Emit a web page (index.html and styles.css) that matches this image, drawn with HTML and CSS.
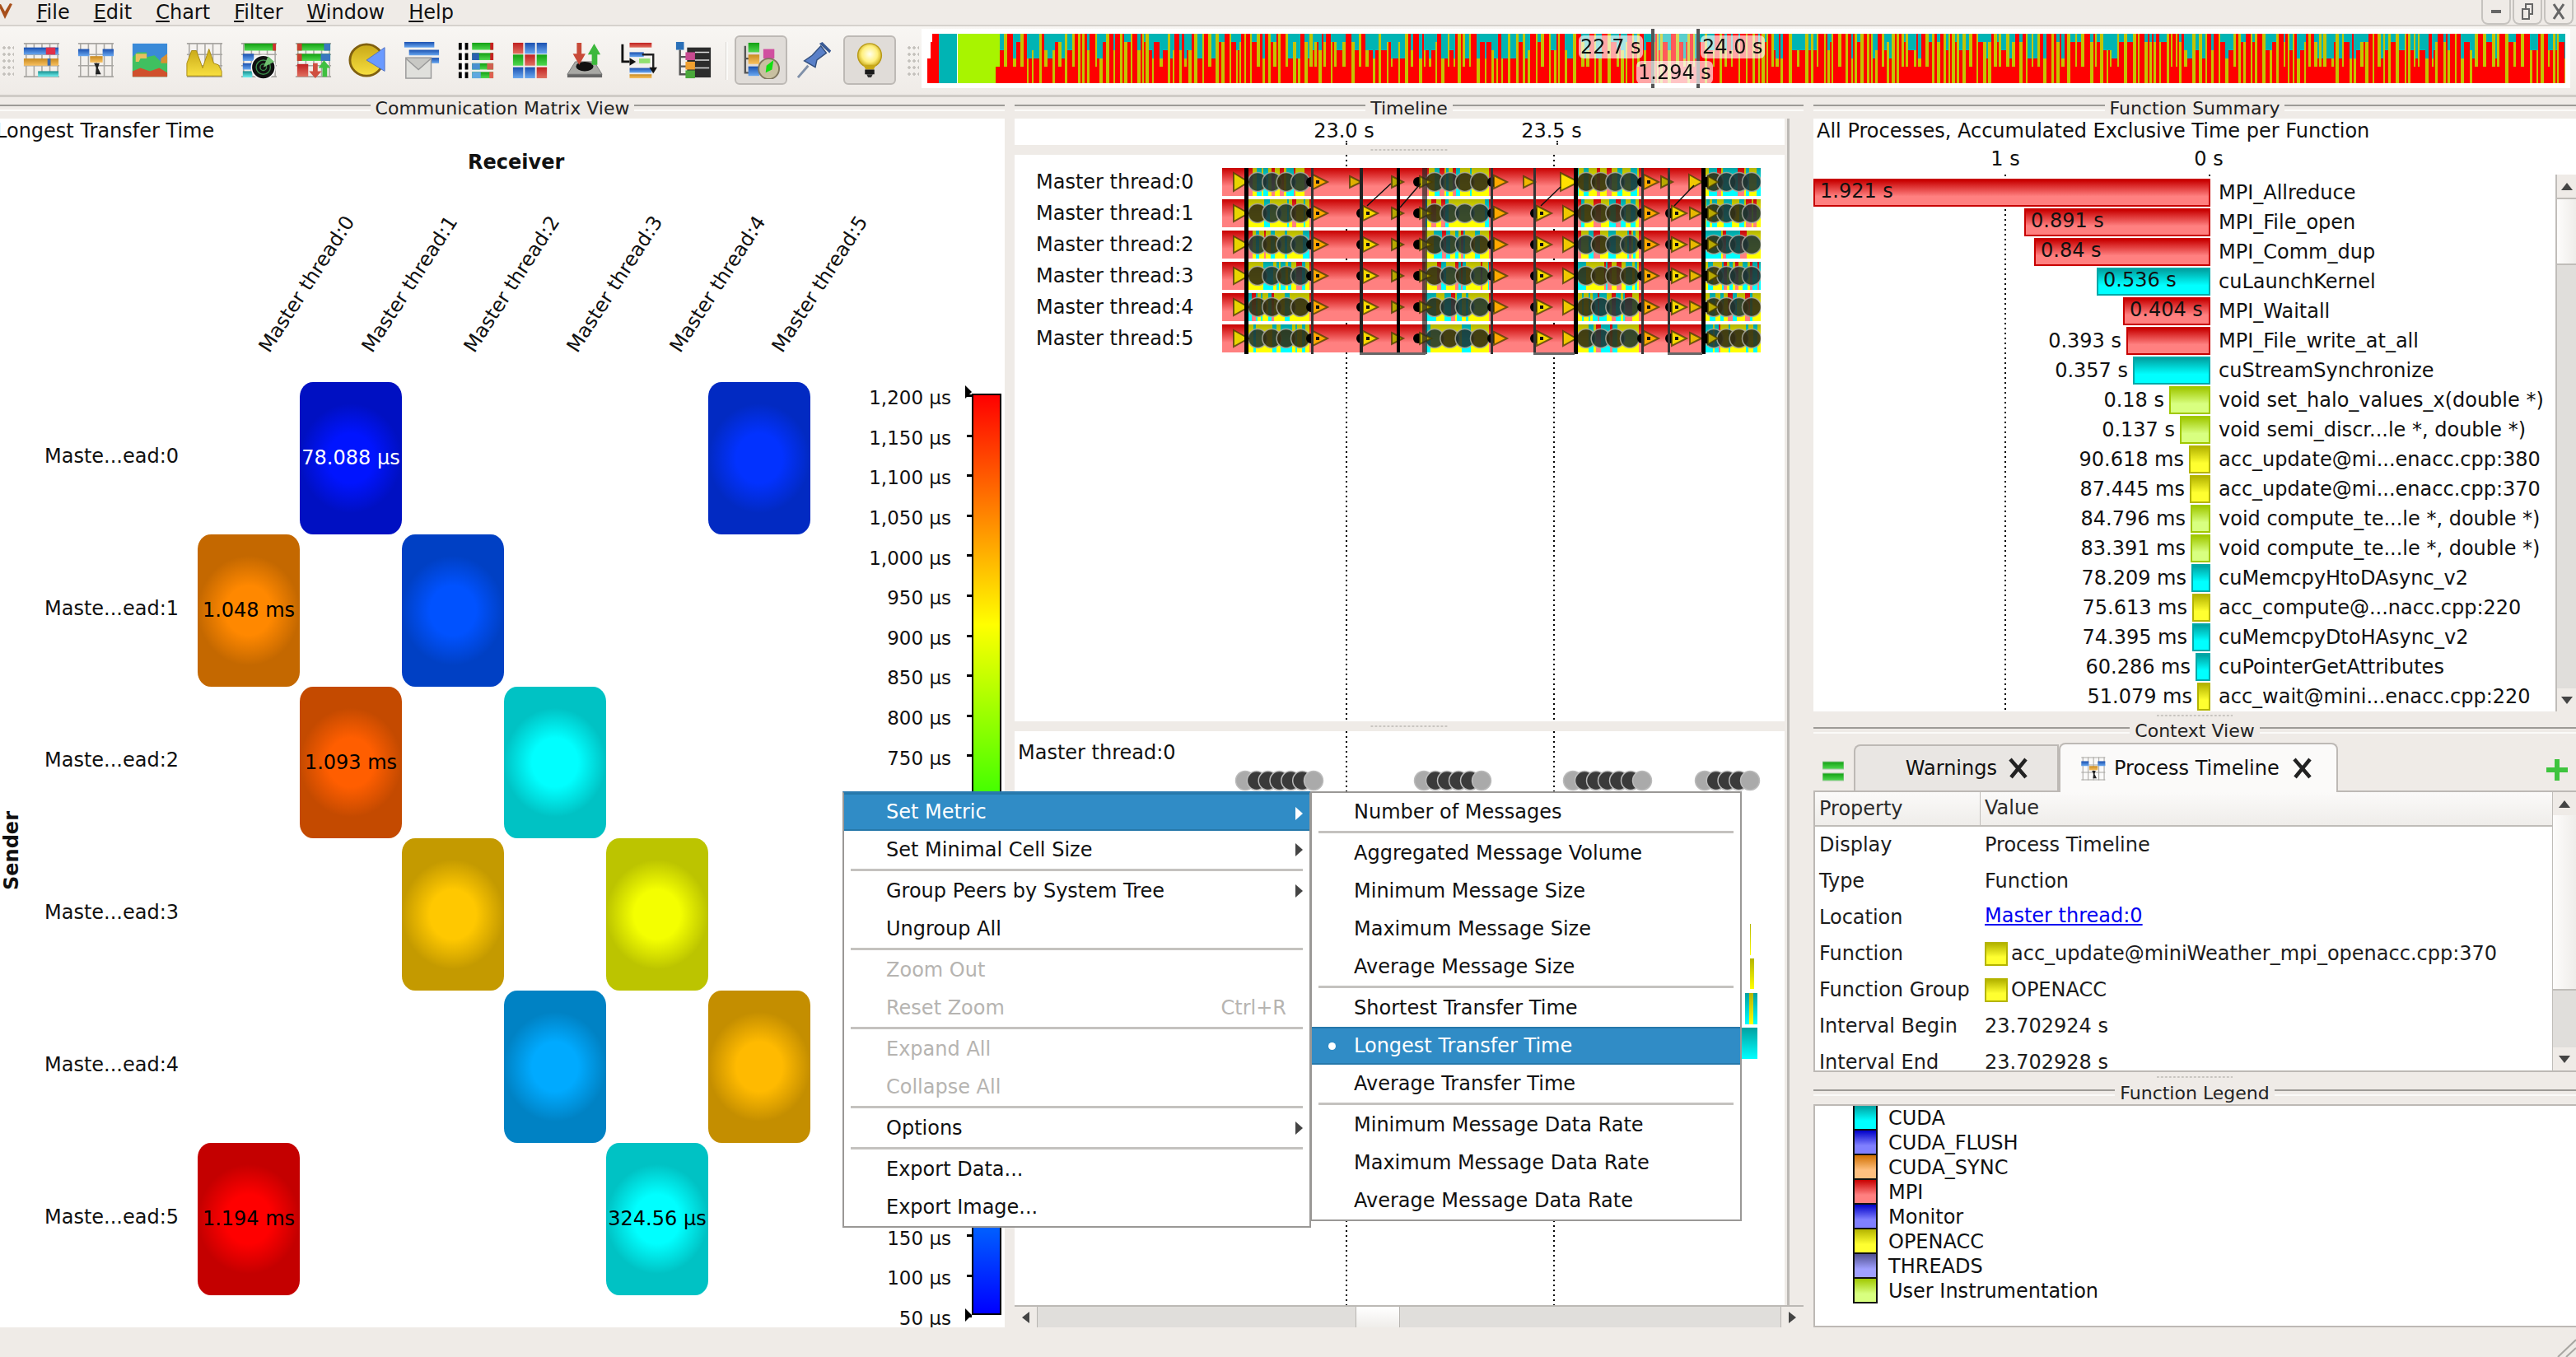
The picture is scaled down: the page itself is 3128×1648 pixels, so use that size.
FILE: index.html
```html
<!DOCTYPE html>
<html>
<head>
  <meta charset="utf-8" />
  <title>Vampir</title>
  <link rel="stylesheet" href="styles.css">
</head>
<body>
  <svg class="defs" width="0" height="0">
    <defs>
      <linearGradient id="gb" x1="0" y1="0" x2="0" y2="1"><stop offset="0" stop-color="#1a50b0"/><stop offset="1" stop-color="#6aa8f0"/></linearGradient>
      <linearGradient id="gg" x1="0" y1="0" x2="0" y2="1"><stop offset="0" stop-color="#12a012"/><stop offset="1" stop-color="#50d850"/></linearGradient>
      <linearGradient id="gr" x1="0" y1="0" x2="0" y2="1"><stop offset="0" stop-color="#c02020"/><stop offset="1" stop-color="#e07060"/></linearGradient>
      <linearGradient id="go" x1="0" y1="0" x2="0" y2="1"><stop offset="0" stop-color="#c88a20"/><stop offset="1" stop-color="#f8c060"/></linearGradient>
      <linearGradient id="gc" x1="0" y1="0" x2="0" y2="1"><stop offset="0" stop-color="#1a9090"/><stop offset="1" stop-color="#70f0f0"/></linearGradient>
      <linearGradient id="gy" x1="0" y1="0" x2="0" y2="1"><stop offset="0" stop-color="#c8a818"/><stop offset="1" stop-color="#f8e040"/></linearGradient>
      <radialGradient id="gl" cx="0.5" cy="0.45" r="0.55"><stop offset="0" stop-color="#fffff0"/><stop offset="0.6" stop-color="#fff080"/><stop offset="1" stop-color="#c8a818"/></radialGradient>
      <symbol id="grid" viewBox="0 0 48 48">
        <path d="M5 2V46M15 2V46M25 2V46M35 2V46M45 2V46M2 3H47M2 17H47M2 31H47M2 45H47" stroke="#a8a6a2" stroke-width="1.6" fill="none"/>
      </symbol>
    </defs>
  </svg>

  <div class="menubar">
    <svg class="logo" width="16" height="24" viewBox="0 0 16 24"><path d="M-2 3L6 20L15 2L12 1L6 11L1 2Z" fill="#a8501c"/></svg>
    <span class="menu-item"><u>F</u>ile</span>
    <span class="menu-item"><u>E</u>dit</span>
    <span class="menu-item"><u>C</u>hart</span>
    <span class="menu-item"><u>F</u>ilter</span>
    <span class="menu-item"><u>W</u>indow</span>
    <span class="menu-item"><u>H</u>elp</span>
    <div class="win-buttons">
      <span class="win-btn"><svg width="20" height="24" viewBox="0 0 20 24"><rect x="4" y="10" width="12" height="4" fill="#666"/></svg></span>
      <span class="win-btn"><svg width="20" height="24" viewBox="0 0 20 24"><path d="M8 3H16V15H12V21H4V9H8Z M8 9H12V15" fill="none" stroke="#666" stroke-width="2"/></svg></span>
      <span class="win-btn"><svg width="20" height="24" viewBox="0 0 20 24"><path d="M4 3L16 21M16 3L4 21" fill="none" stroke="#666" stroke-width="3"/></svg></span>
    </div>
  </div>

  <div class="toolbar">
    <div class="handle"></div>
    <div class="tool">
      <svg viewBox="0 0 48 48"><use href="#grid" width="48" height="48"/><rect x="2" y="8" width="44" height="9" fill="url(#gb)"/><rect x="30" y="8" width="12" height="9" fill="#e0304a"/><rect x="2" y="22" width="44" height="9" fill="url(#go)"/><rect x="32" y="22" width="4" height="9" fill="#3a6ab0"/><rect x="20" y="38" width="26" height="7" fill="url(#gc)"/></svg>
    </div>
    <div class="tool">
      <svg viewBox="0 0 48 48"><use href="#grid" width="48" height="48"/><rect x="2" y="10" width="14" height="9" fill="url(#gb)"/><rect x="33" y="10" width="14" height="9" fill="url(#gb)"/><rect x="17" y="19" width="16" height="8" fill="url(#go)"/><path d="M22 28H29L27 34L31 42H24L25 34Z" fill="#222"/></svg>
    </div>
    <div class="tool">
      <svg viewBox="0 0 48 48"><rect x="2" y="3" width="44" height="42" fill="#3a8ad8"/><path d="M2 20L8 14L20 14L20 20L30 18L38 26L46 20V45H2Z" fill="#40c060"/><path d="M6 16H20V22H12L10 26H6Z" fill="#e8c060"/><path d="M38 22L46 16V28H38Z" fill="#d89030"/><path d="M2 38L12 34L24 38L36 34L46 40V45H2Z" fill="#d0502c"/></svg>
    </div>
    <div class="tool">
      <svg viewBox="0 0 48 48"><use href="#grid" width="48" height="48"/><path d="M2 44V28L8 12L14 12L22 34L30 10L36 28L42 30L46 38V44Z" fill="url(#gy)" stroke="#a88a10" stroke-width="1"/></svg>
    </div>
    <div class="tool">
      <svg viewBox="0 0 48 48"><use href="#grid" width="48" height="48"/><rect x="6" y="3" width="40" height="9" fill="url(#gg)"/><rect x="42" y="3" width="4" height="9" fill="#d03030"/><rect x="4" y="16" width="14" height="9" fill="url(#gb)"/><rect x="4" y="28" width="12" height="8" fill="url(#gb)"/><rect x="4" y="38" width="12" height="8" fill="url(#gc)"/><circle cx="30" cy="33" r="15" fill="#111" stroke="#fff" stroke-width="1.5"/><circle cx="30" cy="33" r="9" fill="none" stroke="#3a8a4a" stroke-width="1.5"/><circle cx="30" cy="33" r="4" fill="none" stroke="#3a8a4a" stroke-width="1.5"/><path d="M30 33L36 19L44 26Z" fill="#70c070"/></svg>
    </div>
    <div class="tool">
      <svg viewBox="0 0 48 48"><use href="#grid" width="48" height="48"/><rect x="4" y="3" width="42" height="9" fill="url(#gg)"/><rect x="4" y="3" width="6" height="9" fill="#c84030"/><rect x="38" y="3" width="8" height="9" fill="#3a78c0"/><rect x="4" y="16" width="42" height="9" fill="url(#gg)"/><rect x="4" y="16" width="6" height="9" fill="#c84030"/><rect x="34" y="16" width="12" height="9" fill="#3a78c0"/><rect x="4" y="29" width="14" height="16" fill="url(#gr)"/><path d="M24 28H30V38H35L27 47L19 38H24Z" fill="#d05040"/><path d="M38 24L46 34H42V45H36V34H31Z" fill="#40c040"/></svg>
    </div>
    <div class="tool">
      <svg viewBox="0 0 48 48"><ellipse cx="23" cy="24" rx="21" ry="20" fill="url(#gy)" stroke="#806010" stroke-width="3"/><path d="M23 24L46 8V38Z" fill="#6a9aff" stroke="#5070c0"/></svg>
    </div>
    <div class="tool">
      <svg viewBox="0 0 48 48"><rect x="2" y="1" width="38" height="7" fill="url(#gb)"/><rect x="8" y="11" width="38" height="7" fill="url(#gb)"/><rect x="14" y="21" width="32" height="7" fill="url(#gb)"/><rect x="4" y="21" width="32" height="26" fill="#e0e0dc" stroke="#999" stroke-width="1.5"/><path d="M4 22L20 36L36 22" fill="#c8c8c4" stroke="#999" stroke-width="1.5"/></svg>
    </div>
    <div class="tool">
      <svg viewBox="0 0 48 48"><path d="M2 2H14V11H2ZM2 15H14V24H2ZM2 28H14V36H2ZM2 39H14V47H2Z" fill="#000"/><path d="M6 2H10V47H6Z" fill="#fff"/><rect x="19" y="2" width="27" height="9" fill="url(#gg)"/><rect x="42" y="2" width="4" height="9" fill="#c82020"/><rect x="19" y="15" width="27" height="9" fill="url(#gg)"/><rect x="19" y="15" width="9" height="9" fill="#2a60b0"/><rect x="42" y="15" width="4" height="9" fill="#c82020"/><rect x="19" y="28" width="27" height="8" fill="url(#gg)"/><rect x="19" y="28" width="10" height="8" fill="#4a90d0"/><rect x="38" y="28" width="8" height="8" fill="#d06050"/><rect x="19" y="39" width="27" height="8" fill="url(#gg)"/><rect x="19" y="39" width="11" height="8" fill="#60a8e0"/><rect x="41" y="39" width="5" height="8" fill="#e06050"/></svg>
    </div>
    <div class="tool">
      <svg viewBox="0 0 48 48"><rect x="2" y="2" width="13" height="14" fill="url(#gr)"/><rect x="17" y="2" width="13" height="14" fill="url(#gb)"/><rect x="32" y="2" width="13" height="14" fill="url(#gb)"/><rect x="2" y="17" width="13" height="14" fill="url(#gg)"/><rect x="17" y="17" width="13" height="14" fill="url(#gr)"/><rect x="32" y="17" width="13" height="14" fill="url(#gg)"/><rect x="2" y="33" width="13" height="14" fill="url(#gb)"/><rect x="17" y="33" width="13" height="14" fill="url(#gb)"/><rect x="32" y="33" width="13" height="14" fill="url(#gr)"/></svg>
    </div>
    <div class="tool">
      <svg viewBox="0 0 48 48"><path d="M12 26H36L46 42H2Z" fill="#a8a8a4" stroke="#777"/><rect x="2" y="42" width="44" height="4" fill="#666"/><ellipse cx="24" cy="32" rx="11" ry="6" fill="#111"/><path d="M14 2H20V16H25L17 30L9 16H14Z" fill="#c84a38"/><path d="M36 3L44 17H40V30H33V17H28Z" fill="#3cb83c"/></svg>
    </div>
    <div class="tool">
      <svg viewBox="0 0 48 48"><rect x="12" y="2" width="28" height="6" fill="url(#gr)"/><rect x="12" y="14" width="18" height="6" fill="url(#gb)"/><rect x="12" y="24" width="24" height="5" fill="#e8e8e4"/><rect x="24" y="22" width="14" height="6" fill="#90e070"/><rect x="12" y="34" width="28" height="6" fill="url(#gb)"/><rect x="12" y="42" width="28" height="5" fill="url(#go)"/><path d="M3 4V26H12" fill="none" stroke="#111" stroke-width="3"/><path d="M12 21L20 26L12 31Z" fill="#111"/><path d="M28 17H42V34" fill="none" stroke="#222" stroke-width="2.5"/><path d="M37 33H47L42 41Z" fill="#111"/></svg>
    </div>
    <div class="tool">
      <svg viewBox="0 0 48 48"><rect x="2" y="1" width="10" height="10" fill="#2a70b8"/><path d="M7 11V42H16M7 20H16M7 32H16" fill="none" stroke="#555" stroke-width="2.5"/><rect x="16" y="8" width="30" height="38" fill="#2c2c2c"/><path d="M26 14H44M26 24H44M26 34H44" stroke="#ddd" stroke-width="1.5"/><rect x="14" y="14" width="12" height="10" fill="#c84a90"/><rect x="14" y="26" width="12" height="10" fill="#f0a030"/><rect x="14" y="37" width="12" height="10" fill="#4aa83a"/></svg>
    </div>
    <div class="sep"></div>
    <div class="tool checked">
      <svg viewBox="0 0 48 48"><path d="M4 6V40H10M4 22H10" fill="none" stroke="#555" stroke-width="2.5"/><rect x="8" y="2" width="14" height="12" fill="url(#gg)"/><rect x="8" y="17" width="14" height="12" fill="url(#go)"/><rect x="8" y="32" width="14" height="12" fill="url(#gb)"/><rect x="27" y="10" width="14" height="12" fill="#d050a0"/><circle cx="34" cy="35" r="13" fill="#c8c0a0" stroke="#807860" stroke-width="2"/><path d="M31 31L40 24L38 36L30 40Z" fill="#10e010"/></svg>
    </div>
    <div class="tool">
      <svg viewBox="0 0 48 48"><path d="M2 46L15 31" stroke="#8090a8" stroke-width="3"/><path d="M10 25L24 33L26 24L38 15L31 6L20 18Z" fill="#5a80c8" stroke="#34507e" stroke-width="1.5"/><path d="M29 3L42 15L44 12L33 1Z" fill="#3a5a94"/></svg>
    </div>
    <div class="tool checked">
      <svg viewBox="0 0 48 48"><circle cx="24" cy="18" r="15" fill="url(#gl)" stroke="#b89a18" stroke-width="1.5"/><path d="M16 30H32L29 36H19Z" fill="#c8a818"/><rect x="18" y="36" width="12" height="6" fill="#1a1a1a"/><path d="M20 42H28L26 46H22Z" fill="#333"/></svg>
    </div>
    <div class="handle handle-end"></div>
    <div class="overview">
      <canvas id="overviewCanvas" width="1989" height="60"></canvas>
      <div class="ov-select"></div>
      <span class="ov-label ov-begin">22.7 s</span>
      <span class="ov-label ov-end">24.0 s</span>
      <span class="ov-label ov-len">1.294 s</span>
    </div>
  </div>

  <div class="docks">
    <div class="dock dock-matrix">
      <div class="dock-title"><span>Communication Matrix View</span></div>
      <div class="matrix-view">
        <div class="metric-name">Longest Transfer Time</div>
        <div class="receiver">Receiver</div>
        <div class="matrix-body">
          <div class="matrix">
            <div class="sender"><b>Sender</b></div>
            <div class="col-heads">
              <span>Master thread:0</span>
              <span>Master thread:1</span>
              <span>Master thread:2</span>
              <span>Master thread:3</span>
              <span>Master thread:4</span>
              <span>Master thread:5</span>
            </div>
            <div class="row-label r0">Maste...ead:0</div>
            <div class="row-label r1">Maste...ead:1</div>
            <div class="row-label r2">Maste...ead:2</div>
            <div class="row-label r3">Maste...ead:3</div>
            <div class="row-label r4">Maste...ead:4</div>
            <div class="row-label r5">Maste...ead:5</div>

            <div class="cell c1 r0 light" style="--edge:#0010c2;--mid:#0014ff">78.088 µs</div>
            <div class="cell c5 r0" style="--edge:#022ac2;--mid:#0232ff"></div>
            <div class="cell c0 r1" style="--edge:#c46800;--mid:#ff8800">1.048 ms</div>
            <div class="cell c2 r1" style="--edge:#0040c4;--mid:#0052ff"></div>
            <div class="cell c1 r2" style="--edge:#c44a00;--mid:#ff5e00">1.093 ms</div>
            <div class="cell c3 r2" style="--edge:#00c2c4;--mid:#00ffff"></div>
            <div class="cell c2 r3" style="--edge:#c49a00;--mid:#ffc800"></div>
            <div class="cell c4 r3" style="--edge:#bcc400;--mid:#f4ff00"></div>
            <div class="cell c3 r4" style="--edge:#0082c4;--mid:#00aaff"></div>
            <div class="cell c5 r4" style="--edge:#c48e00;--mid:#ffba00"></div>
            <div class="cell c0 r5" style="--edge:#c40000;--mid:#ff0000">1.194 ms</div>
            <div class="cell c4 r5" style="--edge:#00c2c4;--mid:#00ffff">324.56 µs</div>
          </div>
          <div class="scale">
            <div class="scale-ticks">
              <span>1,200 µs</span><span>1,150 µs</span><span>1,100 µs</span><span>1,050 µs</span>
              <span>1,000 µs</span><span>950 µs</span><span>900 µs</span><span>850 µs</span>
              <span>800 µs</span><span>750 µs</span>
              <!-- these ones sit under the open menu -->
              <span></span><span></span><span></span><span></span><span></span><span></span>
              <span></span><span></span><span></span><span></span><span></span>
              <span>150 µs</span><span>100 µs</span><span>50 µs</span>
            </div>
            <div class="scale-bar"></div>
          </div>
        </div>
      </div>
    </div>

    <div class="dock dock-timeline">
      <div class="dock-title"><span>Timeline</span></div>
      <div class="tl-ruler">
        <span class="tl-tick t1">23.0 s</span>
        <span class="tl-tick t2">23.5 s</span>
      </div>
      <div class="grip"></div>
      <div class="tl-panel tl-upper">
        <i class="dotline t1"></i><i class="dotline t2"></i>
        <div class="tl-labels">
          <span>Master thread:0</span>
          <span>Master thread:1</span>
          <span>Master thread:2</span>
          <span>Master thread:3</span>
          <span>Master thread:4</span>
          <span>Master thread:5</span>
        </div>
        <canvas id="timelineCanvas" width="654" height="232"></canvas>
      </div>
      <div class="grip"></div>
      <div class="tl-panel tl-lower">
        <i class="dotline t1"></i><i class="dotline t2"></i>
        <div class="tl-thread">Master thread:0</div>
        <canvas id="processCanvas" width="935" height="380"></canvas>
      </div>
      <div class="hscroll">
        <span class="arrow-left"></span>
        <div class="hs-trough"><div class="hs-thumb"></div></div>
        <span class="arrow-right"></span>
      </div>
    </div>

    <div class="dock dock-side">
      <div class="dock-title"><span>Function Summary</span></div>
      <div class="fn-panel">
        <div class="fn-caption">All Processes, Accumulated Exclusive Time per Function</div>
        <div class="fn-axis"><span>1 s</span><span>0 s</span></div>
        <div class="fn-main">
          <div class="fn-list">
            <i class="fn-dot d1"></i><i class="fn-dot d0"></i>
            <div class="fn-row"><div class="fn-track"><div class="fn-bar mpi in" style="width:482px">1.921 s</div></div><span>MPI_Allreduce</span></div>
            <div class="fn-row"><div class="fn-track"><div class="fn-bar mpi in" style="width:226px">0.891 s</div></div><span>MPI_File_open</span></div>
            <div class="fn-row"><div class="fn-track"><div class="fn-bar mpi in" style="width:214px">0.84 s</div></div><span>MPI_Comm_dup</span></div>
            <div class="fn-row"><div class="fn-track"><div class="fn-bar cuda in" style="width:138px">0.536 s</div></div><span>cuLaunchKernel</span></div>
            <div class="fn-row"><div class="fn-track"><div class="fn-bar mpi in" style="width:106px">0.404 s</div></div><span>MPI_Waitall</span></div>
            <div class="fn-row"><div class="fn-track">0.393 s<div class="fn-bar mpi" style="width:102px"></div></div><span>MPI_File_write_at_all</span></div>
            <div class="fn-row"><div class="fn-track">0.357 s<div class="fn-bar cuda" style="width:94px"></div></div><span>cuStreamSynchronize</span></div>
            <div class="fn-row"><div class="fn-track">0.18 s<div class="fn-bar user" style="width:50px"></div></div><span>void set_halo_values_x(double *)</span></div>
            <div class="fn-row"><div class="fn-track">0.137 s<div class="fn-bar user" style="width:37px"></div></div><span>void semi_discr...le *, double *)</span></div>
            <div class="fn-row"><div class="fn-track">90.618 ms<div class="fn-bar acc" style="width:26px"></div></div><span>acc_update@mi...enacc.cpp:380</span></div>
            <div class="fn-row"><div class="fn-track">87.445 ms<div class="fn-bar acc" style="width:25px"></div></div><span>acc_update@mi...enacc.cpp:370</span></div>
            <div class="fn-row"><div class="fn-track">84.796 ms<div class="fn-bar user" style="width:24px"></div></div><span>void compute_te...le *, double *)</span></div>
            <div class="fn-row"><div class="fn-track">83.391 ms<div class="fn-bar user" style="width:24px"></div></div><span>void compute_te...le *, double *)</span></div>
            <div class="fn-row"><div class="fn-track">78.209 ms<div class="fn-bar cuda" style="width:23px"></div></div><span>cuMemcpyHtoDAsync_v2</span></div>
            <div class="fn-row"><div class="fn-track">75.613 ms<div class="fn-bar acc" style="width:22px"></div></div><span>acc_compute@...nacc.cpp:220</span></div>
            <div class="fn-row"><div class="fn-track">74.395 ms<div class="fn-bar cuda" style="width:22px"></div></div><span>cuMemcpyDtoHAsync_v2</span></div>
            <div class="fn-row"><div class="fn-track">60.286 ms<div class="fn-bar cuda" style="width:18px"></div></div><span>cuPointerGetAttributes</span></div>
            <div class="fn-row"><div class="fn-track">51.079 ms<div class="fn-bar acc" style="width:16px"></div></div><span>acc_wait@mini...enacc.cpp:220</span></div>
          </div>
          <div class="vscroll fn-scroll">
            <span class="arrow-up"></span>
            <div class="vs-thumb"></div>
            <div class="vs-trough"></div>
            <span class="arrow-down"></span>
          </div>
        </div>
      </div>
      <div class="grip grip-side"></div>

      <div class="dock-title"><span>Context View</span></div>
      <div class="tabbar">
        <svg class="tab-menu" width="26" height="26" viewBox="0 0 26 26"><rect y="1" width="26" height="9" fill="url(#gg)" stroke="#9cc89c"/><rect y="15" width="26" height="9" fill="url(#gg)" stroke="#9cc89c"/></svg>
        <div class="tab">
          <span>Warnings</span>
          <svg class="tab-x" width="26" height="26" viewBox="0 0 26 26"><path d="M3 2L22 24M22 2L4 24" stroke="#222" stroke-width="4.5"/></svg>
        </div>
        <div class="tab tab-active">
          <svg width="31" height="31" viewBox="0 0 48 48"><use href="#grid" width="48" height="48"/><rect x="2" y="10" width="14" height="9" fill="url(#gb)"/><rect x="33" y="10" width="14" height="9" fill="url(#gb)"/><rect x="17" y="19" width="16" height="8" fill="url(#go)"/><path d="M22 28H29L27 34L31 42H24L25 34Z" fill="#222"/></svg>
          <span>Process Timeline</span>
          <svg class="tab-x" width="26" height="26" viewBox="0 0 26 26"><path d="M3 2L22 24M22 2L4 24" stroke="#222" stroke-width="4.5"/></svg>
        </div>
        <svg class="tab-add" width="26" height="26" viewBox="0 0 26 26"><path d="M10 0H16V10H26V16H16V26H10V16H0V10H10Z" fill="#3ec43e"/></svg>
      </div>
      <div class="ctx-box">
        <div class="ctx-table">
          <div class="ctx-head"><span>Property</span><span>Value</span></div>
          <div class="ctx-row"><span>Display</span><span>Process Timeline</span></div>
          <div class="ctx-row"><span>Type</span><span>Function</span></div>
          <div class="ctx-row"><span>Location</span><span><a class="ctx-link">Master thread:0</a></span></div>
          <div class="ctx-row"><span>Function</span><span><i class="swatch acc"></i>acc_update@miniWeather_mpi_openacc.cpp:370</span></div>
          <div class="ctx-row"><span>Function Group</span><span><i class="swatch acc"></i>OPENACC</span></div>
          <div class="ctx-row"><span>Interval Begin</span><span>23.702924 s</span></div>
          <div class="ctx-row"><span>Interval End</span><span>23.702928 s</span></div>
        </div>
        <div class="vscroll ctx-scroll">
          <span class="arrow-up"></span>
          <div class="vs-thumb"></div>
          <div class="vs-trough"></div>
          <span class="arrow-down"></span>
        </div>
      </div>
      <div class="grip"></div>

      <div class="dock-title"><span>Function Legend</span></div>
      <div class="legend">
        <div class="legend-row"><i class="legend-swatch cuda"></i>CUDA</div>
        <div class="legend-row"><i class="legend-swatch blue"></i>CUDA_FLUSH</div>
        <div class="legend-row"><i class="legend-swatch sync"></i>CUDA_SYNC</div>
        <div class="legend-row"><i class="legend-swatch mpi"></i>MPI</div>
        <div class="legend-row"><i class="legend-swatch blue"></i>Monitor</div>
        <div class="legend-row"><i class="legend-swatch acc"></i>OPENACC</div>
        <div class="legend-row"><i class="legend-swatch threads"></i>THREADS</div>
        <div class="legend-row"><i class="legend-swatch user"></i>User Instrumentation</div>
      </div>
    </div>
  </div>

  <div class="statusbar"><svg width="28" height="24" viewBox="0 0 28 24"><path d="M6 24L28 3M16 24L28 13" stroke="#a8a6a2" stroke-width="2"/></svg></div>

  <div class="popup popup-main">
    <div class="popup-item hot has-sub">Set Metric</div>
    <div class="popup-item has-sub">Set Minimal Cell Size</div>
    <hr />
    <div class="popup-item has-sub">Group Peers by System Tree</div>
    <div class="popup-item">Ungroup All</div>
    <hr />
    <div class="popup-item off">Zoom Out</div>
    <div class="popup-item off">Reset Zoom<span class="shortcut">Ctrl+R</span></div>
    <hr />
    <div class="popup-item off">Expand All</div>
    <div class="popup-item off">Collapse All</div>
    <hr />
    <div class="popup-item has-sub">Options</div>
    <hr />
    <div class="popup-item">Export Data...</div>
    <div class="popup-item">Export Image...</div>
  </div>
  <div class="popup popup-sub">
    <div class="popup-item">Number of Messages</div>
    <hr />
    <div class="popup-item">Aggregated Message Volume</div>
    <div class="popup-item">Minimum Message Size</div>
    <div class="popup-item">Maximum Message Size</div>
    <div class="popup-item">Average Message Size</div>
    <hr />
    <div class="popup-item">Shortest Transfer Time</div>
    <div class="popup-item hot bullet">Longest Transfer Time</div>
    <div class="popup-item">Average Transfer Time</div>
    <hr />
    <div class="popup-item">Minimum Message Data Rate</div>
    <div class="popup-item">Maximum Message Data Rate</div>
    <div class="popup-item">Average Message Data Rate</div>
  </div>

  <script src="app.js"></script>
</body>
</html>
```

FILE: styles.css
```css
* {
  box-sizing: border-box;
}
html, body {
  margin: 0;
  height: 100%;
}
body {
  width: 3128px;
  height: 1648px;
  overflow: hidden;
  display: flex;
  flex-direction: column;
  position: relative;
  background: #efebe7;
  color: #111;
  font-family: "DejaVu Sans", sans-serif;
  font-size: 24px;
  line-height: 28px;
}
.defs {
  position: absolute;
}

/* menu bar */
.menubar {
  height: 32px;
  flex: none;
  display: flex;
  align-items: center;
  border-bottom: 2px solid #d6d2cd;
}
.logo {
  margin-right: 14px;
  flex: none;
}
.menu-item {
  padding: 0 14.5px;
}
.win-buttons {
  margin-left: auto;
  margin-right: 3px;
  display: flex;
  gap: 2px;
  align-self: flex-start;
}
.win-btn {
  width: 36px;
  height: 30px;
  display: flex;
  align-items: center;
  justify-content: center;
  border: 2px solid #c6c3bf;
  border-top: none;
  border-radius: 0 0 8px 8px;
}

/* tool bar */
.toolbar {
  height: 86px;
  flex: none;
  display: flex;
  align-items: center;
  padding-left: 2px;
  background: linear-gradient(#f8f6f3, #efebe7);
  border-bottom: 3px solid #cfcbc6;
}
.handle {
  width: 15px;
  height: 40px;
  flex: none;
  background-image: radial-gradient(circle, #c4c1bc 1.5px, transparent 2px);
  background-size: 6px 8px;
}
.handle-end {
  margin: 0 3px 0 12px;
}
.tool {
  width: 66px;
  height: 60px;
  flex: none;
  display: flex;
  align-items: center;
  justify-content: center;
  margin-top: -2px;
}
.tool svg {
  width: 46px;
  height: 46px;
}
.tool.checked {
  background: #e0dcd8;
  border: 2px solid #bdb9b5;
  border-radius: 6px;
  width: 64px;
  margin: -2px 1px 0;
}
.sep {
  width: 3px;
  height: 46px;
  margin: 0 7px 0 6px;
  flex: none;
  background: #fbfaf8;
  border-left: 1px solid #dcd9d5;
}
.overview {
  width: 2002px;
  height: 72px;
  flex: none;
  position: relative;
  background: #fff;
  padding: 6px 0 0 7px;
  margin-top: -6px;
}
.overview canvas {
  display: block;
}
.ov-select {
  position: absolute;
  left: 886px;
  top: 0;
  width: 59px;
  height: 72px;
  background: rgba(255, 255, 255, 0.35);
  border-left: 4px solid #555;
  border-right: 4px solid #555;
}
.ov-label {
  position: absolute;
  background: rgba(255, 255, 255, 0.65);
  border-radius: 6px;
  padding: 0 2px;
  color: #111;
}
.ov-begin { left: 798px; top: 8px; }
.ov-end { left: 946px; top: 8px; }
.ov-len { left: 868px; top: 39px; }

/* docks */
.docks {
  flex: 1;
  min-height: 0;
  display: grid;
  grid-template-columns: 1220px 958px 926px;
  column-gap: 12px;
}
.dock {
  display: flex;
  flex-direction: column;
  min-height: 0;
  min-width: 0;
  overflow: hidden;
}
.dock-title {
  height: 26px;
  flex: none;
  display: flex;
  align-items: flex-start;
  justify-content: center;
  font-size: 22px;
  line-height: 24px;
  color: #222;
}
.dock-title::before, .dock-title::after {
  content: "";
  flex: 1;
  height: 4px;
  margin-top: 9px;
  border-top: 2px solid #9d9a96;
  border-bottom: 2px solid #fbfaf8;
}
.dock-title span {
  padding: 2px 6px 0;
}
.grip {
  height: 12px;
  flex: none;
  background: radial-gradient(circle, #c4c1bc 1px, transparent 1.5px) center / 5px 100% repeat-x;
  background-size: 5px 12px;
  background-clip: content-box;
  padding: 0 45%;
}

/* communication matrix */
.matrix-view {
  flex: 1;
  background: #fff;
  overflow: hidden;
  display: flex;
  flex-direction: column;
  min-height: 0;
}
.metric-name {
  margin-left: -5px;
  height: 32px;
  line-height: 30px;
  flex: none;
}
.receiver {
  height: 24px;
  flex: none;
  padding-left: 568px;
  font-weight: bold;
  line-height: 42px;
}
.matrix-body {
  display: flex;
  flex: 1;
  min-height: 0;
}
.matrix {
  display: grid;
  width: 984px;
  flex: none;
  grid-template-columns: 28px 212px repeat(6, 124px);
  grid-template-rows: 264px repeat(6, 184.8px);
}
.sender {
  grid-column: 1;
  grid-row: 2 / 8;
  writing-mode: vertical-rl;
  transform: rotate(180deg);
  align-self: center;
  justify-self: center;
  margin-bottom: -30px;
}
.col-heads {
  grid-column: 3 / 9;
  grid-row: 1;
  display: grid;
  grid-template-columns: repeat(6, 124.7px);
  align-items: end;
}
.col-heads span {
  white-space: nowrap;
  width: 0;
  margin-left: 92px;
  margin-bottom: 31px;
  transform-origin: 0 100%;
  transform: rotate(-57deg);
}
.row-label {
  grid-column: 2;
  padding-left: 26px;
  align-self: center;
  margin-top: -5px;
}
.r0 { grid-row: 2; }
.r1 { grid-row: 3; }
.r2 { grid-row: 4; }
.r3 { grid-row: 5; }
.r4 { grid-row: 6; }
.r5 { grid-row: 7; }
.cell {
  display: flex;
  align-items: center;
  justify-content: center;
  border-radius: 16px / 18px;
  background: radial-gradient(ellipse 50% 36% at 50% 50%, var(--mid) 45%, var(--edge) 100%);
  color: #000;
  white-space: nowrap;
}
.cell.light {
  color: #fff;
}
.c0 { grid-column: 3; }
.c1 { grid-column: 4; }
.c2 { grid-column: 5; }
.c3 { grid-column: 6; }
.c4 { grid-column: 7; }
.c5 { grid-column: 8; }

/* colour scale */
.scale {
  flex: 1;
  display: flex;
  align-items: flex-start;
  margin-top: 259px;
  min-width: 0;
}
.scale-ticks {
  width: 196px;
  flex: none;
  display: flex;
  flex-direction: column;
}
.scale-ticks span {
  height: 48.6px;
  flex: none;
  display: flex;
  align-items: center;
  justify-content: flex-end;
  padding-right: 25px;
  position: relative;
  font-size: 23px;
}
.scale-ticks span::after {
  content: "";
  position: absolute;
  right: 0;
  top: 20px;
  width: 6px;
  height: 3px;
  background: #000;
}
.scale-bar {
  width: 36px;
  height: 1119px;
  flex: none;
  margin-top: 19px;
  border: 2px solid #000;
  background: linear-gradient(#ff0000, #ffff00 25%, #00ff00 50%, #00ffff 75%, #0000ff);
  position: relative;
}
.scale-bar::before, .scale-bar::after {
  content: "";
  position: absolute;
  left: -10px;
  border: 8px solid transparent;
  border-left: 8px solid #000;
  border-right: 0;
}
.scale-bar::before { top: -12px; }
.scale-bar::after { bottom: -10px; }

/* timeline */
.tl-ruler {
  height: 32px;
  flex: none;
  position: relative;
  background: #fff;
  width: 935px;
}
.tl-tick {
  position: absolute;
  top: 0;
  width: 90px;
  text-align: center;
  line-height: 30px;
}
.tl-tick.t1 { left: 355px; }
.tl-tick.t2 { left: 607px; }
.tl-panel {
  position: relative;
  background: #fff;
  width: 935px;
  overflow: hidden;
}
.tl-upper {
  height: 688px;
  display: flex;
  padding-top: 16px;
  align-items: flex-start;
}
.tl-lower {
  height: 697px;
  display: block;
}
.tl-labels {
  width: 252px;
  flex: none;
  padding-left: 26px;
  display: flex;
  flex-direction: column;
}
.tl-labels span {
  height: 38px;
  line-height: 34px;
}
#timelineCanvas, #processCanvas {
  display: block;
  position: relative;
}
.tl-thread {
  height: 42px;
  padding: 12px 0 0 4px;
}
.dotline {
  position: absolute;
  top: 0;
  bottom: 0;
  width: 2px;
  background: repeating-linear-gradient(#000 0 2px, transparent 2px 6px);
}
.dotline.t1 { left: 402px; }
.dotline.t2 { left: 654px; }
.tl-ruler::after {
  content: "";
  position: absolute;
  left: 402px;
  bottom: 0;
  width: 254px;
  height: 5px;
  border-left: 2px dotted #000;
  border-right: 2px dotted #000;
}
.dock-timeline {
  background-image: linear-gradient(#bcb9b5, #bcb9b5);
  background-size: 3px 1441px;
  background-position: 938px 26px;
  background-repeat: no-repeat;
}
.hscroll {
  height: 27px;
  flex: none;
  display: flex;
  align-items: center;
  border-top: 2px solid #bcb9b5;
  background: #efebe7;
}
.arrow-left, .arrow-right {
  width: 27px;
  flex: none;
  display: flex;
  justify-content: center;
}
.arrow-left::before {
  content: "";
  border: 7px solid transparent;
  border-right: 9px solid #444;
  border-left: 0;
}
.arrow-right::before {
  content: "";
  border: 7px solid transparent;
  border-left: 9px solid #444;
  border-right: 0;
}
.hs-trough {
  flex: 1;
  height: 100%;
  background: #e0dedb;
  padding-left: 386px;
  border-left: 1px solid #b8b5b1;
  border-right: 1px solid #b8b5b1;
}
.hs-thumb {
  width: 54px;
  height: 100%;
  background: linear-gradient(#fff, #efedea);
  border-left: 1px solid #b8b5b1;
  border-right: 1px solid #b8b5b1;
}

/* function summary */
.fn-panel {
  height: 720px;
  flex: none;
  background: #fff;
  display: flex;
  flex-direction: column;
  overflow: hidden;
}
.fn-caption {
  height: 29px;
  flex: none;
  padding-left: 4px;
  line-height: 30px;
}
.fn-axis {
  height: 39px;
  flex: none;
  display: flex;
  padding-left: 203px;
  gap: 187px;
  line-height: 40px;
}
.fn-axis span {
  width: 60px;
  text-align: center;
}
.fn-main {
  flex: 1;
  display: flex;
  min-height: 0;
}
.fn-list {
  flex: 1;
  position: relative;
  padding-top: 4px;
  overflow: hidden;
}
.fn-dot {
  position: absolute;
  top: 0;
  bottom: 0;
  width: 2px;
  background: repeating-linear-gradient(#000 0 2px, transparent 2px 6px);
}
.fn-dot.d1 { left: 232px; }
.fn-dot.d0 { left: 480px; }
.fn-row {
  height: 36px;
  display: flex;
  align-items: center;
  position: relative;
}
.fn-track {
  width: 482px;
  flex: none;
  height: 34px;
  display: flex;
  align-items: center;
  justify-content: flex-end;
  gap: 6px;
  line-height: 28px;
}
.fn-row > span {
  margin-left: 10px;
  white-space: nowrap;
}
.fn-bar {
  height: 34px;
  flex: none;
  border: 2px solid;
}
.fn-bar.in {
  padding-left: 6px;
  line-height: 26px;
}
.mpi { background: linear-gradient(#c80000, #ff8080 65%); border-color: #c80000; }
.cuda { background: linear-gradient(#00a0a0, #00ffff 65%); border-color: #00a8a8; }
.user { background: linear-gradient(#a0c800, #d8ff80 65%); border-color: #a0c800; }
.acc { background: linear-gradient(#b4b400, #ffff30 65%); border-color: #b4b400; }
.blue { background: linear-gradient(#0000c8, #8080ff 65%); border-color: #0000c8; }
.sync { background: linear-gradient(#d07000, #ffc080 65%); border-color: #d07000; }
.threads { background: linear-gradient(#505090, #a0a0ff 65%); border-color: #505090; }
.vscroll {
  width: 25px;
  flex: none;
  display: flex;
  flex-direction: column;
  align-items: stretch;
  border-left: 2px solid #c0bdb9;
  background: #efebe7;
}
.arrow-up, .arrow-down {
  height: 28px;
  flex: none;
  display: flex;
  align-items: center;
  justify-content: center;
}
.arrow-up::before {
  content: "";
  border: 7px solid transparent;
  border-bottom: 9px solid #444;
  border-top: 0;
}
.arrow-down::before {
  content: "";
  border: 7px solid transparent;
  border-top: 9px solid #444;
  border-bottom: 0;
}
.vs-thumb {
  background: linear-gradient(90deg, #fdfcfb, #efedea);
  border-top: 2px solid #c0bdb9;
  border-bottom: 2px solid #c0bdb9;
}
.vs-trough {
  flex: 1;
  background: #e0dedb;
}
.fn-scroll .vs-thumb { height: 82px; }
.grip-side {
  height: 10px;
}

/* context view */
.tabbar {
  height: 60px;
  flex: none;
  display: flex;
  align-items: flex-end;
  padding-left: 11px;
}
.tab-menu {
  margin: 0 12px 10px 0;
  flex: none;
}
.tab {
  height: 56px;
  width: 249px;
  flex: none;
  display: flex;
  align-items: center;
  justify-content: flex-end;
  gap: 13px;
  padding: 0 34px 0 0;
  background: #e9e6e3;
  border: 2px solid #bdb9b5;
  border-bottom: none;
  border-radius: 8px 0 0 0;
}
.tab-active {
  height: 60px;
  width: 339px;
  justify-content: flex-start;
  gap: 10px;
  padding: 0 0 0 24px;
  background: #fbfaf9;
  border-radius: 8px 8px 0 0;
  position: relative;
  top: 2px;
  margin-top: -2px;
}
.tab-active .tab-x {
  margin-left: 5px;
}
.tab-add {
  margin: 0 10px 12px auto;
}
.ctx-box {
  height: 342px;
  flex: none;
  background: #fff;
  border: 2px solid #bdb9b5;
  border-right: none;
  display: flex;
  overflow: hidden;
}
.ctx-table {
  flex: 1;
  min-width: 0;
}
.ctx-head {
  height: 42px;
  display: grid;
  grid-template-columns: 200px 1fr;
  background: linear-gradient(#fbfaf9, #efedea);
  border-bottom: 2px solid #c0bdb9;
  color: #2a2a2a;
  align-items: center;
}
.ctx-head span {
  padding-left: 5px;
}
.ctx-head span + span {
  border-left: 1px solid #c0bdb9;
  padding-left: 5px;
  height: 100%;
  line-height: 38px;
}
.ctx-row {
  height: 44px;
  display: grid;
  grid-template-columns: 200px 1fr;
  align-items: center;
  color: #1c1c1c;
}
.ctx-row span {
  padding-left: 5px;
  display: flex;
  align-items: center;
}
.ctx-row span + span {
  padding-left: 6px;
}
.ctx-link {
  color: #0000f0;
  text-decoration: underline;
  margin-top: -4px;
}
.swatch {
  width: 28px;
  height: 29px;
  flex: none;
  margin-right: 4px;
  border: 2px solid #b4b400;
}
.ctx-scroll {
  width: 29px;
  border-left-width: 1px;
}
.ctx-scroll .vs-thumb {
  flex: none;
  height: 213px;
  border-top: none;
}
.legend {
  flex: 1;
  background: #fff;
  border: 2px solid #bdb9b5;
  border-right: none;
  overflow: hidden;
  padding-left: 46px;
  margin-top: 1px;
  min-height: 0;
}
.legend-row {
  height: 30px;
  display: flex;
  align-items: center;
  line-height: 30px;
}
.legend-swatch {
  width: 30px;
  height: 30px;
  flex: none;
  margin-right: 13px;
  border: 2px solid;
  border-top: none;
}

.statusbar {
  height: 36px;
  flex: none;
  display: flex;
  justify-content: flex-end;
  align-items: flex-end;
}

/* context menus */
.popup {
  position: absolute;
  top: 961px;
  background: #fff;
  border: 2px solid #9a9896;
  border-top-color: #2a7ab0;
}
.popup-main {
  left: 1023px;
  width: 569px;
}
.popup-sub {
  left: 1591px;
  width: 524px;
  border-top-color: #9a9896;
}
.popup hr {
  height: 4px;
  margin: 0 8px;
  border: none;
  border-top: 3px solid #c4c2bf;
}
.popup-item {
  height: 46px;
  display: flex;
  align-items: center;
  justify-content: space-between;
  padding: 0 28px 0 51px;
  position: relative;
}
.popup-item.hot {
  background: #308cc6;
  color: #fff;
  border-bottom: 2px solid #2678aa;
  border-top: 2px solid #2678aa;
}
.popup-item.off {
  color: #b6b4b1;
}
.has-sub::after {
  content: "";
  position: absolute;
  right: 8px;
  top: 15px;
  border: 8px solid transparent;
  border-left: 9px solid #444;
  border-right: 0;
}
.hot.has-sub::after {
  border-left-color: #fff;
}
.bullet::before {
  content: "";
  position: absolute;
  left: 20px;
  top: 17px;
  width: 9px;
  height: 9px;
  border-radius: 50%;
  background: #fff;
}
```

FILE: app.js
```js
// little repeatable random so the stripes stay the same on each load
let seed = 12345;
function rnd() {
  seed = (seed * 1103515245 + 12345) & 0x7fffffff;
  return seed / 0x7fffffff;
}

function drawOverview() {
  const c = document.getElementById("overviewCanvas").getContext("2d");
  const red = "#ff0000", olive = "#c4c400", teal = "#00b4b4", lime = "#a8f400";
  c.fillStyle = red;
  c.fillRect(0, 30, 4, 30);
  c.fillRect(4, 10, 2, 50);
  c.fillRect(6, 0, 8, 60);
  c.fillStyle = teal;
  c.fillRect(14, 0, 22, 60);
  c.fillStyle = lime;
  c.fillRect(37, 0, 51, 60);
  c.fillStyle = red;
  c.fillRect(83, 40, 6, 20);
  let x = 88;
  let odd = false;
  while (x < 1989) {
    // red and olive take turns, red a bit wider
    const w = odd ? 2 + Math.floor(rnd() * 3) : 2 + Math.floor(rnd() * 6);
    c.fillStyle = odd ? olive : red;
    c.fillRect(x, 0, w, 60);
    // teal caps on top of the stack
    if (rnd() < 0.5) {
      c.fillStyle = teal;
      c.fillRect(x, 0, w, 10 + Math.floor(rnd() * 3) * 10);
    }
    // the bottom is mostly red
    if (rnd() < 0.35) {
      c.fillStyle = red;
      c.fillRect(x, 40, w, 20);
    }
    x += w;
    odd = !odd;
  }
}

function barGradient(c, y, top, bottom) {
  const g = c.createLinearGradient(0, y, 0, y + 34);
  g.addColorStop(0, top);
  g.addColorStop(0.65, bottom);
  return g;
}

function triangle(c, x, cy, w, h, fill) {
  c.beginPath();
  c.moveTo(x, cy - h / 2);
  c.lineTo(x + w, cy);
  c.lineTo(x, cy + h / 2);
  c.closePath();
  c.fillStyle = fill;
  c.fill();
  c.lineWidth = 2;
  c.strokeStyle = "rgba(70,60,0,0.75)";
  c.stroke();
}

function drawTimeline() {
  const c = document.getElementById("timelineCanvas").getContext("2d");
  const busy = [[32, 106], [247, 324], [431, 506], [586, 654]];
  const kinds = [
    { top: "#b4b400", bottom: "#ffff00" },
    { top: "#b4b400", bottom: "#ffff00" },
    { top: "#00a0a0", bottom: "#00ffff" },
    { top: "#c80000", bottom: "#ff8080" }
  ];
  // x, width, height, colour, black dot behind, dot inside
  const marks = [
    [14, 18, 20, "#e8d400"],
    [110, 18, 18, "#ffa800", 1, 1],
    [171, 18, 18, "#f8d800", 1, 1],
    [206, 14, 14, "#b8a800"],
    [240, 14, 14, "#b8a800", 1],
    [330, 16, 16, "#ffa800", 1],
    [382, 18, 18, "#f8d800", 1, 1],
    [414, 16, 18, "#f0c800"],
    [512, 18, 18, "#ffa800", 1, 1],
    [546, 18, 18, "#f8d800", 1, 1],
    [568, 14, 14, "#e8b800"],
    [590, 12, 14, "#b8a800", 1]
  ];
  const topMarks = [
    [14, 18, 22, "#e8d400"],
    [110, 18, 18, "#ffa800", 1, 1],
    [155, 14, 14, "#e0b000"],
    [206, 14, 14, "#b8a800"],
    [240, 14, 14, "#b8a800", 1],
    [330, 16, 16, "#ffa800", 1],
    [366, 14, 14, "#f0b800"],
    [411, 22, 22, "#ffe000"],
    [512, 18, 18, "#ffa800", 1, 1],
    [533, 14, 14, "#b8a800"],
    [567, 16, 18, "#f0c800"],
    [590, 12, 14, "#b8a800", 1]
  ];
  for (let row = 0; row < 6; row++) {
    const y = row * 38;
    const cy = y + 17;
    c.fillStyle = barGradient(c, y, "#c80000", "#ff8080");
    c.fillRect(0, y, 654, 34);
    busy.forEach(([a, b]) => {
      let x = a;
      while (x < b) {
        const w = Math.min(2 + Math.floor(rnd() * 5), b - x);
        const k = kinds[rnd() < 0.55 ? 0 : rnd() < 0.7 ? 2 : 3];
        c.fillStyle = barGradient(c, y, k.top, k.bottom);
        c.fillRect(x, y, w, 34);
        x += w;
      }
      // the dark send/recv circles
      for (let i = 0; i < 4; i++) {
        const px = a + 11 + i * ((b - a - 22) / 3);
        c.beginPath();
        c.arc(px, cy, 11.5, 0, Math.PI * 2);
        c.fillStyle = rnd() < 0.5 ? "rgba(30,50,50,0.88)" : "rgba(50,45,20,0.9)";
        c.fill();
        c.lineWidth = 1.5;
        c.strokeStyle = "rgba(170,170,160,0.85)";
        c.stroke();
      }
    });
    (row === 0 ? topMarks : marks).forEach(([x, w, h, fill, blob, dot]) => {
      if (blob) {
        c.beginPath();
        c.arc(x - 2, cy, 6, 0, Math.PI * 2);
        c.fillStyle = "#000";
        c.fill();
      }
      triangle(c, x, cy, w, h, fill);
      if (dot) {
        c.fillStyle = "#111";
        c.fillRect(x + 4, cy - 2, 4, 4);
      }
    });
  }
  // phase lines
  const lines = [[27, 5, "#000"], [108, 3, "#333"], [167, 4, "#222"], [212, 4, "#000"], [243, 6, "rgba(40,40,40,0.7)"],
    [326, 3, "#333"], [378, 3, "#333"], [427, 5, "#000"], [509, 3, "#333"], [541, 3, "#333"], [582, 5, "#000"]];
  lines.forEach(([x, w, col]) => {
    c.fillStyle = col;
    c.fillRect(x, 0, w, 226);
  });
  c.fillStyle = "#666";
  c.fillRect(167, 224, 80, 3);
  c.fillRect(378, 224, 50, 3);
  c.fillRect(541, 224, 42, 3);
  // messages from thread 1 up to thread 0
  c.strokeStyle = "#111";
  c.lineWidth = 1.5;
  [[176, 46, 205, 19], [216, 48, 241, 19], [387, 46, 411, 23], [549, 46, 573, 21]].forEach(([a, b, d, e]) => {
    c.beginPath();
    c.moveTo(a, b);
    c.lineTo(d, e);
    c.stroke();
  });
}

function drawProcess() {
  const c = document.getElementById("processCanvas").getContext("2d");
  [[269, 374], [486, 578], [667, 773], [827, 904]].forEach(([a, b]) => {
    const n = Math.round((b - a - 22) / 15);
    for (let i = 0; i <= n; i++) {
      c.beginPath();
      c.arc(a + 11 + i * (b - a - 22) / n, 18, 11.5, 0, Math.PI * 2);
      c.fillStyle = i === 0 || i === n ? "#aaa" : "#3a3a3a";
      c.fill();
      c.lineWidth = 1.5;
      c.strokeStyle = "#bbb";
      c.stroke();
    }
  });
  const bar = (x, y, w, h, top, bottom) => {
    const g = c.createLinearGradient(0, y, 0, y + h);
    g.addColorStop(0, top);
    g.addColorStop(1, bottom);
    c.fillStyle = g;
    c.fillRect(x, y, w, h);
  };
  bar(893, 192, 1, 38, "#b4b400", "#ffff00");
  bar(893, 234, 5, 37, "#b4b400", "#ffff00");
  bar(887, 276, 15, 38, "#00a0a0", "#00ffff");
  bar(892, 276, 5, 38, "#b4b400", "#ffff00");
  bar(883, 318, 19, 38, "#00a0a0", "#00ffff");
}

drawOverview();
drawTimeline();
drawProcess();
```
